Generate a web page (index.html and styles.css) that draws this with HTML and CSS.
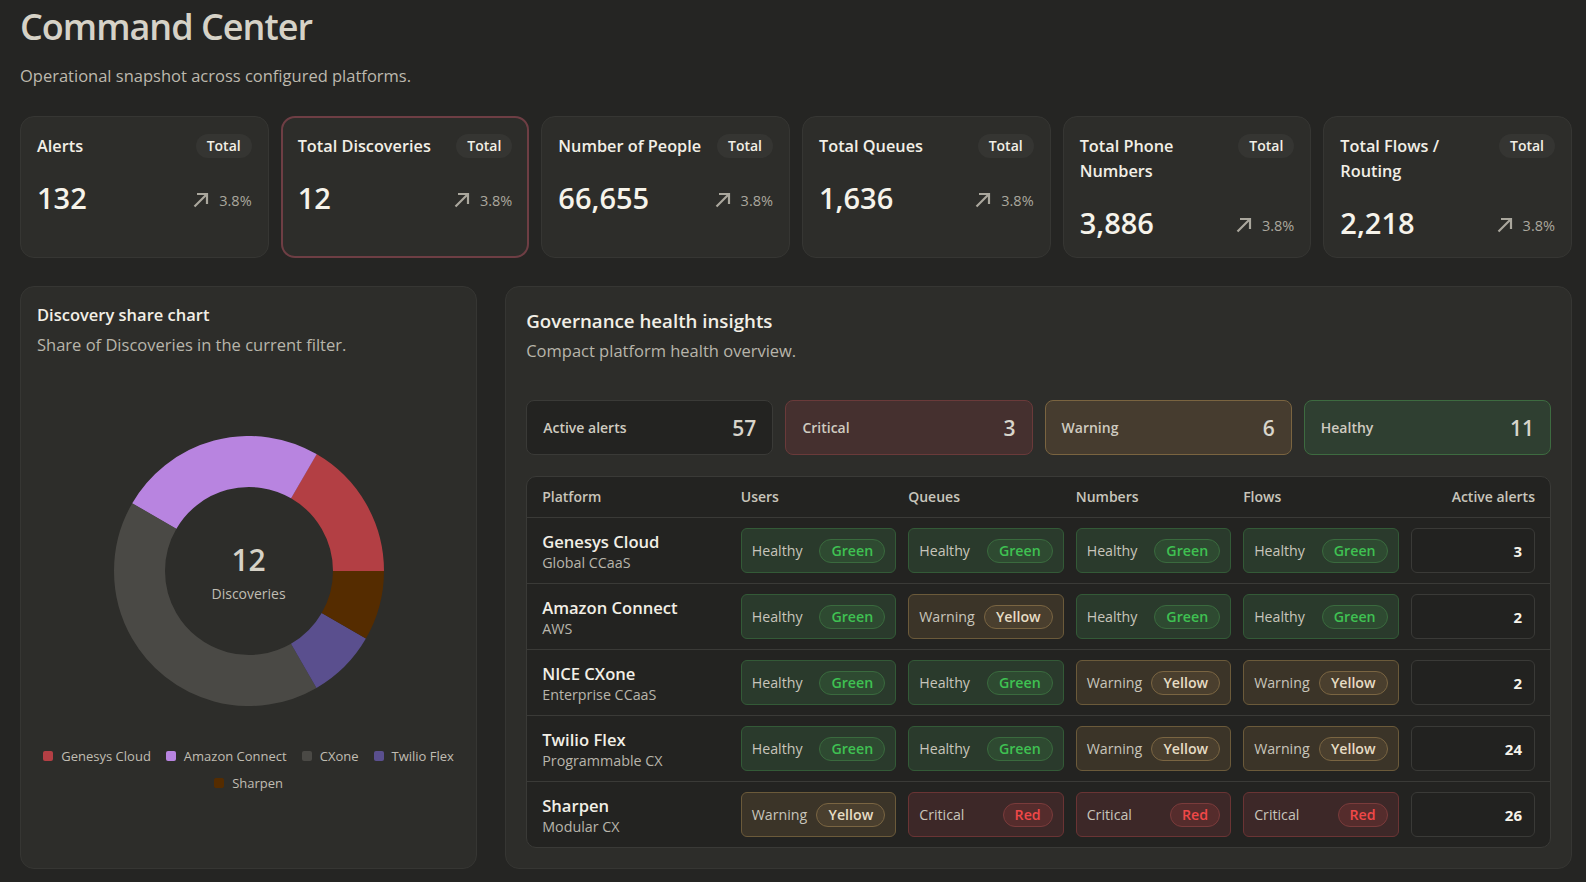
FILE: index.html
```html
<!DOCTYPE html>
<html lang="en">
<head>
    <meta charset="UTF-8">
    <meta name="viewport" content="width=device-width, initial-scale=1.0">
    <title>Command Center</title>
    <link rel="stylesheet" href="styles.css">
</head>
<body>

    <main class="page">

        <!-- Page heading -->
        <header class="page-head">
            <h1>Command Center</h1>
            <p>Operational snapshot across configured platforms.</p>
        </header>

        <!-- KPI cards -->
        <section class="kpi-grid">
            <div class="kpi-card">
                <div class="kpi-head"><h3>Alerts</h3><span class="kpi-pill">Total</span></div>
                <div class="kpi-body">
                    <span class="kpi-value">132</span>
                    <span class="kpi-trend"><svg viewBox="0 0 18 18"><path d="M2.5 15.5 L15 3 M5 3 H15 V13"/></svg>3.8%</span>
                </div>
            </div>
            <div class="kpi-card active">
                <div class="kpi-head"><h3>Total Discoveries</h3><span class="kpi-pill">Total</span></div>
                <div class="kpi-body">
                    <span class="kpi-value">12</span>
                    <span class="kpi-trend"><svg viewBox="0 0 18 18"><path d="M2.5 15.5 L15 3 M5 3 H15 V13"/></svg>3.8%</span>
                </div>
            </div>
            <div class="kpi-card">
                <div class="kpi-head"><h3>Number of People</h3><span class="kpi-pill">Total</span></div>
                <div class="kpi-body">
                    <span class="kpi-value">66,655</span>
                    <span class="kpi-trend"><svg viewBox="0 0 18 18"><path d="M2.5 15.5 L15 3 M5 3 H15 V13"/></svg>3.8%</span>
                </div>
            </div>
            <div class="kpi-card">
                <div class="kpi-head"><h3>Total Queues</h3><span class="kpi-pill">Total</span></div>
                <div class="kpi-body">
                    <span class="kpi-value">1,636</span>
                    <span class="kpi-trend"><svg viewBox="0 0 18 18"><path d="M2.5 15.5 L15 3 M5 3 H15 V13"/></svg>3.8%</span>
                </div>
            </div>
            <div class="kpi-card">
                <div class="kpi-head"><h3>Total Phone Numbers</h3><span class="kpi-pill">Total</span></div>
                <div class="kpi-body">
                    <span class="kpi-value">3,886</span>
                    <span class="kpi-trend"><svg viewBox="0 0 18 18"><path d="M2.5 15.5 L15 3 M5 3 H15 V13"/></svg>3.8%</span>
                </div>
            </div>
            <div class="kpi-card">
                <div class="kpi-head"><h3>Total Flows / Routing</h3><span class="kpi-pill">Total</span></div>
                <div class="kpi-body">
                    <span class="kpi-value">2,218</span>
                    <span class="kpi-trend"><svg viewBox="0 0 18 18"><path d="M2.5 15.5 L15 3 M5 3 H15 V13"/></svg>3.8%</span>
                </div>
            </div>
        </section>

        <section class="lower-grid">

            <!-- Discovery share donut -->
            <div class="panel chart-panel">
                <h2>Discovery share chart</h2>
                <p class="panel-sub">Share of Discoveries in the current filter.</p>

                <div class="chart-body">
                    <div class="donut">
                        <!-- circumference of r=109.5 is 688; segments run counter-clockwise from 3 o'clock -->
                        <svg viewBox="-135 -135 270 270" width="270" height="270">
                            <circle r="109.5" stroke="#b33f44" stroke-dasharray="114.67 688" transform="rotate(-60)"/>
                            <circle r="109.5" stroke="#b884e0" stroke-dasharray="172 688" transform="rotate(-150)"/>
                            <circle r="109.5" stroke="#4a4945" stroke-dasharray="286.67 688" transform="rotate(-300)"/>
                            <circle r="109.5" stroke="#5a4f8e" stroke-dasharray="57.33 688" transform="rotate(-330)"/>
                            <circle r="109.5" stroke="#552c00" stroke-dasharray="57.33 688"/>
                        </svg>
                        <div class="donut-label">
                            <strong>12</strong>
                            <span>Discoveries</span>
                        </div>
                    </div>

                    <ul class="legend">
                        <li><i class="sw-genesys"></i>Genesys Cloud</li>
                        <li><i class="sw-amazon"></i>Amazon Connect</li>
                        <li><i class="sw-cxone"></i>CXone</li>
                        <li><i class="sw-twilio"></i>Twilio Flex</li>
                        <li><i class="sw-sharpen"></i>Sharpen</li>
                    </ul>
                </div>
            </div>

            <!-- Governance health -->
            <div class="panel health-panel">
                <h2>Governance health insights</h2>
                <p class="panel-sub">Compact platform health overview.</p>

                <div class="tiles">
                    <div class="tile"><span>Active alerts</span><b>57</b></div>
                    <div class="tile critical"><span>Critical</span><b>3</b></div>
                    <div class="tile warning"><span>Warning</span><b>6</b></div>
                    <div class="tile healthy"><span>Healthy</span><b>11</b></div>
                </div>

                <div class="health-table">
                    <div class="ht-row ht-head">
                        <span>Platform</span>
                        <span>Users</span>
                        <span>Queues</span>
                        <span>Numbers</span>
                        <span>Flows</span>
                        <span class="right">Active alerts</span>
                    </div>

                    <div class="ht-row">
                        <div class="platform"><b>Genesys Cloud</b><span>Global CCaaS</span></div>
                        <div class="status green"><span>Healthy</span><em>Green</em></div>
                        <div class="status green"><span>Healthy</span><em>Green</em></div>
                        <div class="status green"><span>Healthy</span><em>Green</em></div>
                        <div class="status green"><span>Healthy</span><em>Green</em></div>
                        <div class="alert-count">3</div>
                    </div>

                    <div class="ht-row">
                        <div class="platform"><b>Amazon Connect</b><span>AWS</span></div>
                        <div class="status green"><span>Healthy</span><em>Green</em></div>
                        <div class="status yellow"><span>Warning</span><em>Yellow</em></div>
                        <div class="status green"><span>Healthy</span><em>Green</em></div>
                        <div class="status green"><span>Healthy</span><em>Green</em></div>
                        <div class="alert-count">2</div>
                    </div>

                    <div class="ht-row">
                        <div class="platform"><b>NICE CXone</b><span>Enterprise CCaaS</span></div>
                        <div class="status green"><span>Healthy</span><em>Green</em></div>
                        <div class="status green"><span>Healthy</span><em>Green</em></div>
                        <div class="status yellow"><span>Warning</span><em>Yellow</em></div>
                        <div class="status yellow"><span>Warning</span><em>Yellow</em></div>
                        <div class="alert-count">2</div>
                    </div>

                    <div class="ht-row">
                        <div class="platform"><b>Twilio Flex</b><span>Programmable CX</span></div>
                        <div class="status green"><span>Healthy</span><em>Green</em></div>
                        <div class="status green"><span>Healthy</span><em>Green</em></div>
                        <div class="status yellow"><span>Warning</span><em>Yellow</em></div>
                        <div class="status yellow"><span>Warning</span><em>Yellow</em></div>
                        <div class="alert-count">24</div>
                    </div>

                    <div class="ht-row">
                        <div class="platform"><b>Sharpen</b><span>Modular CX</span></div>
                        <div class="status yellow"><span>Warning</span><em>Yellow</em></div>
                        <div class="status red"><span>Critical</span><em>Red</em></div>
                        <div class="status red"><span>Critical</span><em>Red</em></div>
                        <div class="status red"><span>Critical</span><em>Red</em></div>
                        <div class="alert-count">26</div>
                    </div>
                </div>
            </div>

        </section>
    </main>

</body>
</html>
```

FILE: styles.css
```css
/* Basic Reset */
* {
    margin: 0;
    padding: 0;
    box-sizing: border-box;
}

body {
    font-family: "Segoe UI", "Open Sans", sans-serif;
    background-color: #252523;
    color: #f2efe6;
}

.page {
    padding: 4px 14px 14px 20px;
}

/* Heading */
.page-head h1 {
    font-size: 36px;
    line-height: 46px;
    font-weight: 600;
    color: #d6d2c7;
    letter-spacing: -1px;
}

.page-head p {
    margin-top: 14px;
    font-size: 16.5px;
    line-height: 24px;
    color: #bdb9ae;
}

/* KPI Cards */
.kpi-grid {
    display: grid;
    grid-template-columns: repeat(6, minmax(0, 1fr));
    gap: 12px;
    margin-top: 28px;
}

.kpi-card {
    background-color: #2d2d2a;
    border: 1px solid #363633;
    border-radius: 14px;
    padding: 17px 16px 16px;
}

.kpi-card.active {
    border: 2px solid #6e3e44;
    padding: 16px 15px 15px;
}

.kpi-head {
    display: flex;
    justify-content: space-between;
    align-items: flex-start;
    gap: 10px;
}

.kpi-head h3 {
    font-size: 16.3px;
    line-height: 25px;
    font-weight: 600;
    color: #f2efe6;
}

.kpi-pill {
    flex-shrink: 0;
    background-color: #353532;
    border-radius: 999px;
    padding: 2px 11px;
    font-size: 14px;
    line-height: 20px;
    font-weight: 600;
    color: #f2efe6;
}

.kpi-body {
    display: flex;
    justify-content: space-between;
    align-items: baseline;
    margin-top: 21px;
}

.kpi-value {
    font-size: 29px;
    line-height: 36px;
    font-weight: 600;
    color: #f6f3ea;
}

.kpi-trend {
    display: inline-flex;
    align-items: center;
    gap: 9px;
    font-size: 14.5px;
    color: #aaa79d;
}

.kpi-trend svg {
    width: 18px;
    height: 18px;
    fill: none;
    stroke: #aaa79d;
    stroke-width: 2.2;
}

/* Lower Layout */
.lower-grid {
    display: grid;
    grid-template-columns: minmax(0, 3fr) minmax(0, 7fr);
    gap: 28px;
    margin-top: 28px;
}

.panel {
    background-color: #2d2d2a;
    border: 1px solid #363633;
    border-radius: 14px;
}

.panel h2 {
    font-size: 16.5px;
    line-height: 24px;
    font-weight: 600;
    color: #f2efe6;
}

.panel-sub {
    font-size: 16.5px;
    line-height: 24px;
    color: #b8b5ab;
    margin-top: 6px;
}

/* Chart Panel */
.chart-panel {
    padding: 16px;
    display: flex;
    flex-direction: column;
}

.chart-body {
    flex: 1;
    display: flex;
    flex-direction: column;
    align-items: center;
    justify-content: center;
    padding-top: 20px;
}

.donut {
    position: relative;
    width: 270px;
    height: 270px;
}

.donut svg {
    display: block;
}

.donut circle {
    fill: none;
    stroke-width: 51;
}

.donut-label {
    position: absolute;
    inset: 0;
    display: flex;
    flex-direction: column;
    align-items: center;
    justify-content: center;
    padding-top: 4px;
}

.donut-label strong {
    font-size: 30px;
    line-height: 36px;
    font-weight: 600;
    color: #d6d2c7;
}

.donut-label span {
    margin-top: 6px;
    font-size: 14px;
    line-height: 20px;
    color: #c0bdb3;
}

.legend {
    list-style: none;
    display: flex;
    flex-wrap: wrap;
    justify-content: center;
    column-gap: 15px;
    row-gap: 7px;
    margin-top: 40px;
    max-width: 425px;
}

.legend li {
    display: flex;
    align-items: center;
    gap: 8px;
    font-size: 13px;
    line-height: 20px;
    color: #c0bdb3;
}

.legend i {
    width: 10px;
    height: 10px;
    border-radius: 2px;
}

.sw-genesys { background-color: #b33f44; }
.sw-amazon { background-color: #b884e0; }
.sw-cxone { background-color: #4a4945; }
.sw-twilio { background-color: #5a4f8e; }
.sw-sharpen { background-color: #552c00; }

/* Governance Panel */
.health-panel {
    padding: 20px;
}

.health-panel h2 {
    font-size: 18.7px;
    line-height: 28px;
}

.health-panel .panel-sub {
    margin-top: 4px;
}

.tiles {
    display: grid;
    grid-template-columns: repeat(4, minmax(0, 1fr));
    gap: 12px;
    margin-top: 37px;
}

.tile {
    height: 55px;
    display: flex;
    align-items: center;
    justify-content: space-between;
    padding: 0 16px;
    border: 1px solid #3a3a37;
    border-radius: 8px;
    background-color: #232321;
}

.tile span {
    font-size: 14px;
    font-weight: 600;
    color: #cfcbc0;
}

.tile b {
    font-size: 21px;
    font-weight: 600;
    color: #d8d5cb;
}

.tile.critical {
    background-color: #45302f;
    border-color: #6a3a3a;
}

.tile.warning {
    background-color: #463c2f;
    border-color: #7a6440;
}

.tile.healthy {
    background-color: #2f3f31;
    border-color: #3d6b40;
}

/* Health Table */
.health-table {
    margin-top: 21px;
    border: 1px solid #3a3a37;
    border-radius: 10px;
    background-color: #232321;
}

.ht-row {
    display: grid;
    grid-template-columns: minmax(0, 1.2fr) repeat(4, minmax(0, 1fr)) minmax(0, 0.8fr);
    column-gap: 12px;
    align-items: center;
    padding: 10px 15px;
    border-bottom: 1px solid #3a3a37;
}

.ht-row:last-child {
    border-bottom: none;
}

.ht-head {
    font-size: 14px;
    line-height: 20px;
    font-weight: 600;
    color: #c8c5bb;
}

.ht-head .right {
    text-align: right;
}

.platform {
    display: flex;
    flex-direction: column;
    padding-top: 2px;
}

.platform b {
    font-size: 16.6px;
    line-height: 22px;
    font-weight: 600;
    color: #f2efe6;
}

.platform span {
    font-size: 14.3px;
    line-height: 20px;
    color: #b8b5ab;
}

.status {
    height: 45px;
    display: flex;
    align-items: center;
    justify-content: space-between;
    padding: 0 10px;
    border: 1px solid;
    border-radius: 6px;
    font-size: 14.2px;
    color: #c8c5bb;
}

.status em {
    font-style: normal;
    font-weight: 600;
    padding: 1px 11px;
    line-height: 20px;
    border: 1px solid;
    border-radius: 999px;
}

.status.green {
    background-color: #2a3a2c;
    border-color: #335a37;
}

.status.green em {
    color: #3fc152;
    background-color: #2e4a31;
    border-color: #3a6a3e;
}

.status.yellow {
    background-color: #3b3428;
    border-color: #6b5a3a;
}

.status.yellow em {
    color: #e6dcc4;
    background-color: #4a3f2e;
    border-color: #7a6542;
}

.status.red {
    background-color: #3d2828;
    border-color: #6a3434;
}

.status.red em {
    color: #f04848;
    background-color: #552c2c;
    border-color: #7a3b3b;
}

.alert-count {
    height: 45px;
    display: flex;
    align-items: center;
    justify-content: flex-end;
    padding: 0 12px;
    border: 1px solid #3a3a37;
    border-radius: 6px;
    background-color: #222220;
    font-size: 15px;
    font-weight: 700;
    color: #f6f3ea;
}
```
